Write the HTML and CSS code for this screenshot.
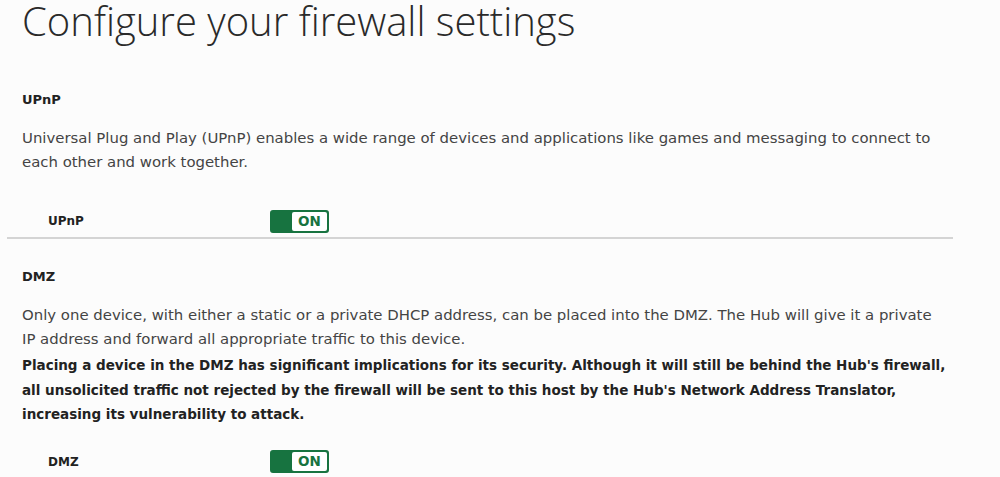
FILE: index.html
```html
<!DOCTYPE html>
<html lang="en">
<head>
<meta charset="utf-8">
<link rel="stylesheet" href="styles.css">
</head>
<body>
<main class="page">
  <h1 class="title">Configure your firewall settings</h1>
  <section class="section">
    <h2 class="heading">UPnP</h2>
    <p class="text">Universal Plug and Play (UPnP) enables a wide range of devices and applications like games and messaging to connect to each other and work together.</p>
    <div class="row row-wide">
      <span class="label">UPnP</span>
      <span class="toggle"><span class="toggle-knob"></span><span class="toggle-text">ON</span></span>
    </div>
  </section>
  <hr class="divider">
  <section class="section">
    <h2 class="heading heading-after">DMZ</h2>
    <p class="text">Only one device, with either a static or a private DHCP address, can be placed into the DMZ. The Hub will give it a private IP address and forward all appropriate traffic to this device.</p>
    <p class="text strong">Placing a device in the DMZ has significant implications for its security. Although it will still be behind the Hub's firewall, all unsolicited traffic not rejected by the firewall will be sent to this host by the Hub's Network Address Translator, increasing its vulnerability to attack.</p>
    <div class="row">
      <span class="label">DMZ</span>
      <span class="toggle"><span class="toggle-knob"></span><span class="toggle-text">ON</span></span>
    </div>
  </section>
</main>
</body>
</html>
```
FILE: styles.css
```css
html, body {
  margin: 0;
  padding: 0;
  background: #fcfcfc;
}
body {
  font-family: "DejaVu Sans", sans-serif;
  color: #333333;
}
.page {
  padding: 0 0 0 7px;
  width: 960px;
}
.title {
  margin: 0;
  padding: 0 0 0 15px;
  font-family: "Open Sans", "DejaVu Sans", sans-serif;
  font-weight: 300;
  font-size: 40px;
  line-height: 42px;
  color: #2a2a2a;
}
.section {
  padding: 0 0 0 15px;
}
.heading {
  margin: 48px 0 0 0;
  font-size: 13px;
  line-height: 20px;
  font-weight: bold;
  color: #222;
}
.heading-after {
  margin-top: 28px;
}
.text {
  margin: 16px 0 0 0;
  max-width: 915px;
  font-size: 14.9px;
  line-height: 24px;
  color: #444;
}
.text.strong {
  margin-top: 2px;
  max-width: none;
  font-size: 13.5px;
  line-height: 24.5px;
  font-weight: bold;
  color: #222;
}
.row {
  display: flex;
  align-items: center;
  margin-top: 23px;
  padding-left: 26px;
  height: 24px;
}
.row-wide {
  margin-top: 35px;
}
.label {
  width: 222px;
  font-size: 12px;
  font-weight: bold;
  color: #222;
}
.toggle {
  display: flex;
  width: 59px;
  height: 23px;
  box-sizing: border-box;
  border: 2px solid #177340;
  border-radius: 3px;
  background: #177340;
}
.toggle-knob {
  width: 20px;
}
.toggle-text {
  flex: 1;
  background: #fff;
  border-radius: 2px;
  color: #177340;
  font-weight: bold;
  font-size: 13.5px;
  line-height: 19px;
  text-align: center;
}
.divider {
  margin: 4px 14px 0 0;
  border: 0;
  height: 2px;
  background: #d4d4d4;
}
```
